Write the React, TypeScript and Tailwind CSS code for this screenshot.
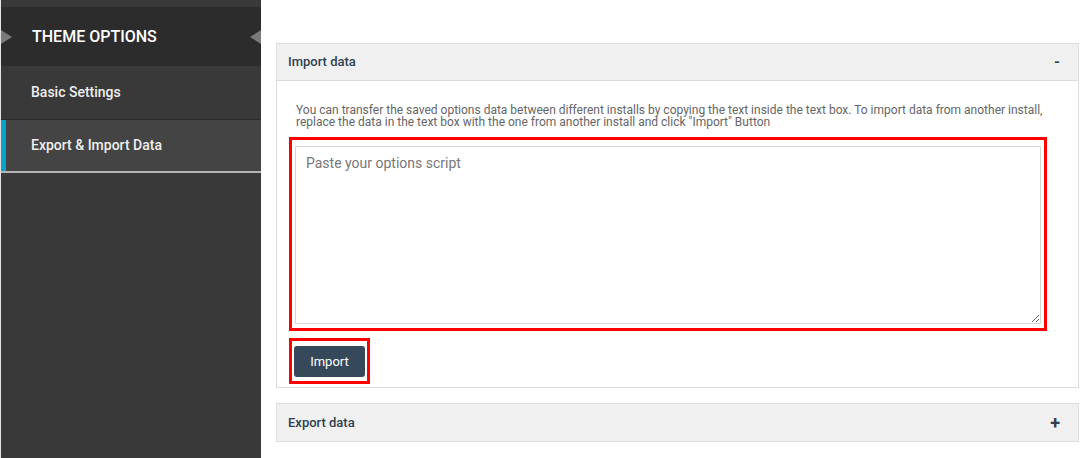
export default function App() {
  return (
    <div className="flex h-[458px] w-full bg-white font-['Roboto',sans-serif]">
      {/* sidebar */}
      <aside className="flex w-[261px] shrink-0 flex-col border-l border-l-[#e5e5e5] bg-[#393939]">
        <div className="h-[7px] bg-[#393939]" />
        <div className="flex h-[59px] items-center bg-[#2c2c2c]">
          <span className="h-0 w-0 border-y-[7px] border-l-[11px] border-y-transparent border-l-[#7a7a7a]" />
          <span className="ml-[20px] flex-1 text-[16px] font-medium text-white">THEME OPTIONS</span>
          <span className="h-0 w-0 border-y-[7px] border-r-[11px] border-y-transparent border-r-[#7a7a7a]" />
        </div>
        <div className="flex h-[54px] items-center border-b border-b-[#2b2b2b] pl-[30px] text-[14px] font-medium text-[#eeeeee]">
          Basic Settings
        </div>
        <div className="flex h-[53px] items-center border-b-2 border-b-[#b5b5b5] bg-[#444444]">
          <span className="h-full w-[5px] bg-[#0ba2c8]" />
          <span className="pl-[25px] text-[14px] font-medium text-[#eeeeee]">Export &amp; Import Data</span>
        </div>
      </aside>

      {/* main */}
      <main className="flex-1 pl-[15px] pr-[10px] pt-[43px]">
        <section className="border border-[#dcdcdc]">
          <div className="flex h-[37px] items-center justify-between border-b border-b-[#dcdcdc] bg-[#f0f0f0] pl-[11px] pr-[18px]">
            <span className="text-[13px] font-medium text-[#2f4050]">Import data</span>
            <span className="text-[15px] font-bold leading-none text-[#2f4050]">-</span>
          </div>
          <div className="px-[12px] pb-[3px] pt-[23px]">
            <p className="pl-[7px] pr-[20px] text-[12px] leading-[12px] text-[#666666]">
              You can transfer the saved options data between different installs by copying the text inside the text box. To import data from another install, replace the data in the text box with the one from another install and click "Import" Button
            </p>
            <div className="mt-[9px] w-[758px] border-[3px] border-[#ff0000] pb-[4px] pl-[3px] pr-[3px] pt-[6px]">
              <textarea
                className="block h-[178px] w-full resize-y border border-[#d6d6d6] px-[10px] pb-[8px] pt-[6px] text-[14px] text-[#555] placeholder:text-[#777] focus:outline-none"
                placeholder="Paste your options script"
              />
            </div>
            <div className="mt-[7px] h-[46px] w-[81px] border-[3px] border-[#ff0000] pb-[4px] pl-[2px] pr-[2px] pt-[5px]">
              <button className="block h-[31px] w-[71px] rounded-[3px] bg-[#35495a] text-[13px] text-white">Import</button>
            </div>
          </div>
        </section>

        <section className="mt-[15px] flex h-[39px] items-center justify-between border border-[#dcdcdc] bg-[#f0f0f0] pl-[11px] pr-[18px]">
          <span className="text-[13px] font-medium text-[#2f4050]">Export data</span>
          <span className="text-[18px] font-bold leading-none text-[#2f4050]">+</span>
        </section>
      </main>
    </div>
  );
}
